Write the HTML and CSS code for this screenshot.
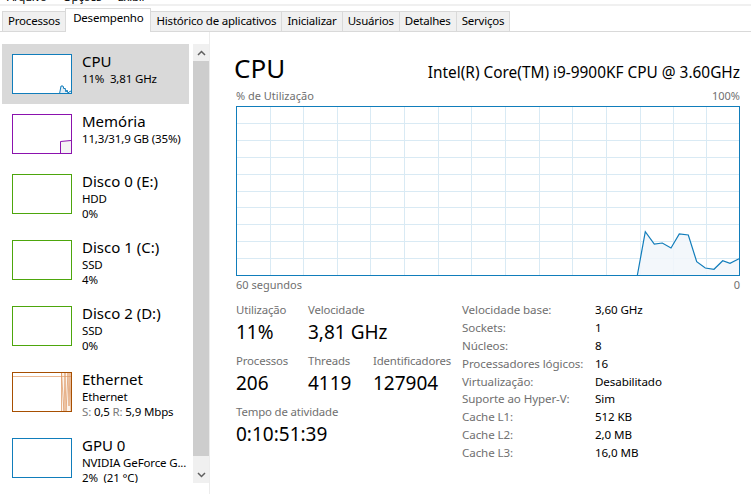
FILE: index.html
```html
<!DOCTYPE html>
<html lang="pt-BR">
<head>
<meta charset="utf-8">
<title>Gerenciador de Tarefas</title>
<link rel="stylesheet" href="styles.css">
</head>
<body>
<div class="window">
  <div class="menubar"><div class="menu-inner"><span>Arquivo</span><span>Opções</span><span>Exibir</span></div></div>
  <div class="tabs">
    <div class="tab">Processos</div>
    <div class="tab active">Desempenho</div>
    <div class="tab">Histórico de aplicativos</div>
    <div class="tab">Inicializar</div>
    <div class="tab">Usuários</div>
    <div class="tab">Detalhes</div>
    <div class="tab">Serviços</div>
  </div>
  <div class="content">
    <aside class="sidebar">
      <div class="list">
        <div class="item selected">
          <div class="thumb thumb-cpu">
            <svg width="60" height="40" viewBox="0 0 60 40"><polygon points="47,39 48,31 50,31 51,34 52,33 53,37 54,35 55,38 56,37 58,36 58,39" fill="#e3eef6"/><polyline points="46.5,39 48,31 50,31 51,34 52,33 53,37 54,35 55,38 56,37 58,36" fill="none" stroke="#117dbb" stroke-width="1"/></svg>
          </div>
          <div class="info"><div class="name">CPU</div><div class="sub">11%&nbsp;&nbsp;3,81 GHz</div></div>
        </div>
        <div class="item">
          <div class="thumb thumb-mem">
            <svg width="60" height="40" viewBox="0 0 60 40"><polygon points="47,27 58,25 58,39 47,39" fill="#f4f2f4"/><polyline points="47.5,39 47.5,26.5 58,25.5" fill="none" stroke="#8b12ae" stroke-width="1"/></svg>
          </div>
          <div class="info"><div class="name">Memória</div><div class="sub">11,3/31,9 GB (35%)</div></div>
        </div>
        <div class="item tall">
          <div class="thumb thumb-disk"></div>
          <div class="info"><div class="name">Disco 0 (E:)</div><div class="sub">HDD</div><div class="sub">0%</div></div>
        </div>
        <div class="item tall">
          <div class="thumb thumb-disk"></div>
          <div class="info"><div class="name">Disco 1 (C:)</div><div class="sub">SSD</div><div class="sub">4%</div></div>
        </div>
        <div class="item tall">
          <div class="thumb thumb-disk"></div>
          <div class="info"><div class="name">Disco 2 (D:)</div><div class="sub">SSD</div><div class="sub">0%</div></div>
        </div>
        <div class="item tall">
          <div class="thumb thumb-eth">
            <svg width="60" height="40" viewBox="0 0 60 40"><polygon points="48,39 48,0 58,0 58,39" fill="#fcf4ec"/><line x1="0" y1="3.5" x2="58" y2="3.5" stroke="#eab892" stroke-width="1"/><polyline points="48.5,39 48.5,0 51,39 52,0 53,39 55,0 56,33 57,0 58,39" fill="none" stroke="#dc9560" stroke-width="0.7"/></svg>
          </div>
          <div class="info"><div class="name">Ethernet</div><div class="sub">Ethernet</div><div class="sub"><span class="dim">S:</span> 0,5 <span class="dim">R:</span> 5,9 Mbps</div></div>
        </div>
        <div class="item tall">
          <div class="thumb thumb-gpu">
            <svg width="60" height="40" viewBox="0 0 60 40"><rect x="47" y="38" width="1" height="1" fill="#117dbb"/><rect x="52" y="38" width="1" height="1" fill="#117dbb"/></svg>
          </div>
          <div class="info"><div class="name">GPU 0</div><div class="sub">NVIDIA GeForce G...</div><div class="sub">2%&nbsp;&nbsp;(21 °C)</div></div>
        </div>
      </div>
      <div class="scrollbar">
        <div class="sb-btn"><svg width="9" height="6" viewBox="0 0 9 6"><polyline points="1,5 4.5,1.5 8,5" fill="none" stroke="#606060" stroke-width="1.5"/></svg></div>
        <div class="sb-track"><div class="sb-thumb"></div></div>
        <div class="sb-btn"><svg width="9" height="6" viewBox="0 0 9 6"><polyline points="1,1 4.5,4.5 8,1" fill="none" stroke="#606060" stroke-width="1.5"/></svg></div>
      </div>
    </aside>
    <main class="panel">
      <div class="header">
        <div class="title">CPU</div>
        <div class="model">Intel(R) Core(TM) i9-9900KF CPU @ 3.60GHz</div>
      </div>
      <div class="axis"><span>% de Utilização</span><span>100%</span></div>
      <svg class="graph" width="504" height="170" viewBox="0 0 504 170">
        <g stroke="#d9eaf4" stroke-width="1">
          <line x1="34.5" y1="0" x2="34.5" y2="170"/>
          <line x1="67.5" y1="0" x2="67.5" y2="170"/>
          <line x1="101.5" y1="0" x2="101.5" y2="170"/>
          <line x1="134.5" y1="0" x2="134.5" y2="170"/>
          <line x1="168.5" y1="0" x2="168.5" y2="170"/>
          <line x1="202.5" y1="0" x2="202.5" y2="170"/>
          <line x1="235.5" y1="0" x2="235.5" y2="170"/>
          <line x1="269.5" y1="0" x2="269.5" y2="170"/>
          <line x1="303.5" y1="0" x2="303.5" y2="170"/>
          <line x1="336.5" y1="0" x2="336.5" y2="170"/>
          <line x1="370.5" y1="0" x2="370.5" y2="170"/>
          <line x1="404.5" y1="0" x2="404.5" y2="170"/>
          <line x1="437.5" y1="0" x2="437.5" y2="170"/>
          <line x1="470.5" y1="0" x2="470.5" y2="170"/>
          <line x1="0" y1="17.5" x2="504" y2="17.5"/>
          <line x1="0" y1="34.5" x2="504" y2="34.5"/>
          <line x1="0" y1="51.5" x2="504" y2="51.5"/>
          <line x1="0" y1="68.5" x2="504" y2="68.5"/>
          <line x1="0" y1="85.5" x2="504" y2="85.5"/>
          <line x1="0" y1="101.5" x2="504" y2="101.5"/>
          <line x1="0" y1="118.5" x2="504" y2="118.5"/>
          <line x1="0" y1="135.5" x2="504" y2="135.5"/>
          <line x1="0" y1="152.5" x2="504" y2="152.5"/>
        </g>
        <polygon points="401.3,169.5 409.3,125.7 418.3,138 426.3,137 435,142 443.3,128 452.3,129 460.7,155.7 469.3,162 478,163.3 486.7,154.7 494,157.3 503,152.7 503,169.5" fill="#f1f6fa" fill-opacity="0.85"/>
        <polyline points="401.3,169.5 409.3,125.7 418.3,138 426.3,137 435,142 443.3,128 452.3,129 460.7,155.7 469.3,162 478,163.3 486.7,154.7 494,157.3 503,152.7" fill="none" stroke="#117dbb" stroke-width="1.2"/>
        <rect x="0.5" y="0.5" width="503" height="169" fill="none" stroke="#117dbb" stroke-width="1"/>
      </svg>
      <div class="axis axis-bottom"><span>60 segundos</span><span>0</span></div>
      <div class="details">
        <div class="stats">
          <div class="stat-row">
            <div class="stat w1"><div class="label">Utilização</div><div class="value">11%</div></div>
            <div class="stat"><div class="label">Velocidade</div><div class="value">3,81 GHz</div></div>
          </div>
          <div class="stat-row">
            <div class="stat w1"><div class="label">Processos</div><div class="value">206</div></div>
            <div class="stat w2"><div class="label">Threads</div><div class="value">4119</div></div>
            <div class="stat"><div class="label">Identificadores</div><div class="value">127904</div></div>
          </div>
          <div class="stat-row">
            <div class="stat"><div class="label">Tempo de atividade</div><div class="value">0:10:51:39</div></div>
          </div>
        </div>
        <div class="specs">
          <div class="k">Velocidade base:</div><div class="v">3,60 GHz</div>
          <div class="k">Sockets:</div><div class="v">1</div>
          <div class="k">Núcleos:</div><div class="v">8</div>
          <div class="k">Processadores lógicos:</div><div class="v">16</div>
          <div class="k">Virtualização:</div><div class="v">Desabilitado</div>
          <div class="k">Suporte ao Hyper-V:</div><div class="v">Sim</div>
          <div class="k">Cache L1:</div><div class="v">512 KB</div>
          <div class="k">Cache L2:</div><div class="v">2,0 MB</div>
          <div class="k">Cache L3:</div><div class="v">16,0 MB</div>
        </div>
      </div>
    </main>
  </div>
</div>
</body>
</html>
```
FILE: styles.css
```css
* { box-sizing: border-box; }
html, body { margin: 0; padding: 0; background: #fff; }
body {
  font-family: "Noto Sans", "Open Sans", sans-serif;
  color: #000;
  width: 751px;
  height: 494px;
  overflow: hidden;
}
.window { width: 751px; height: 494px; display: flex; flex-direction: column; }

.menubar {
  height: 6px;
  overflow: hidden;
  border-bottom: 2px solid #f0f0f0;
}
.menu-inner {
  margin-top: -10px;
  font-size: 11.5px;
  line-height: 14px;
  padding-left: 7px;
  display: flex;
  gap: 16px;
  letter-spacing: -0.3px;
}

.tabs {
  display: flex;
  align-items: flex-end;
  height: 26px;
  padding-left: 2px;
  border-bottom: 1px solid #d9d9d9;
}
.tab {
  height: 20px;
  padding: 0 5px;
  font-size: 11.5px;
  letter-spacing: -0.2px;
  line-height: 18px;
  background: #f0f0f0;
  border: 1px solid #d9d9d9;
  border-bottom: none;
  margin-left: -1px;
  white-space: nowrap;
}
.tab:first-child { margin-left: 0; }
.tab.active {
  height: 24px;
  margin-bottom: -1px;
  background: #fff;
  line-height: 18px;
  padding: 0 7px;
  position: relative;
  z-index: 1;
}

.content { flex: 1; display: flex; min-height: 0; }

.sidebar {
  width: 210px;
  display: flex;
  padding-top: 12px;
  padding-bottom: 11px;
  border-right: 1px solid #ececec;
}
.list {
  width: 193px;
  padding-left: 2px;
  padding-right: 4px;
  overflow: hidden;
}
.item {
  height: 60px;
  display: flex;
  padding: 10px 0 0 10px;
  gap: 10px;
}
.item.tall { height: 66px; }
.item.selected { background: #d9d9d9; }
.thumb {
  width: 60px;
  height: 40px;
  flex: none;
  background: #fff;
  border: 1px solid;
  overflow: hidden;
}
.thumb svg { display: block; }
.thumb-cpu, .thumb-gpu { border-color: #117dbb; }
.thumb-mem { border-color: #8b12ae; }
.thumb-disk { border-color: #4da60c; }
.thumb-eth { border-color: #a74f01; }
.info { margin-top: -2px; white-space: nowrap; }
.name { font-size: 15px; line-height: 19px; }
.sub { font-size: 11.5px; line-height: 15px; letter-spacing: -0.15px; }
.dim { color: #7a7a7a; }

.scrollbar {
  width: 16px;
  background: #f0f0f0;
  display: flex;
  flex-direction: column;
}
.sb-btn {
  height: 17px;
  display: flex;
  align-items: center;
  justify-content: center;
  flex: none;
}
.sb-track { flex: 1; display: flex; flex-direction: column; padding-bottom: 10px; }
.sb-thumb { flex: 1; background: #cdcdcd; }

.panel {
  flex: 1;
  padding: 20px 11px 0 26px;
  display: flex;
  flex-direction: column;
}
.header {
  display: flex;
  justify-content: space-between;
  align-items: baseline;
}
.title { font-size: 26px; line-height: 33px; margin-left: -2px; }
.model { font-size: 15.4px; line-height: 20px; }
.axis {
  display: flex;
  justify-content: space-between;
  font-size: 11px;
  line-height: 14px;
  color: #707070;
  margin-top: 4px;
}
.graph { display: block; margin-top: 3px; }
.axis-bottom { margin-top: 2px; }

.details { display: flex; margin-top: 12px; }
.stats { width: 226px; display: flex; flex-direction: column; margin-top: -2px; }
.stat-row { display: flex; height: 51px; }
.stat.w1 { width: 72px; }
.stat.w2 { width: 65px; }
.label { font-size: 11.4px; line-height: 15px; color: #707070; white-space: nowrap; letter-spacing: -0.15px; }
.value { font-size: 19px; line-height: 26px; margin-top: 2px; }

.specs {
  display: grid;
  grid-template-columns: 133px auto;
  grid-auto-rows: 17.9px;
  font-size: 11.6px;
  line-height: 18px;
  margin-top: -3px;
  letter-spacing: -0.1px;
}
.k { color: #707070; white-space: nowrap; }
.v { color: #000; white-space: nowrap; }
```
